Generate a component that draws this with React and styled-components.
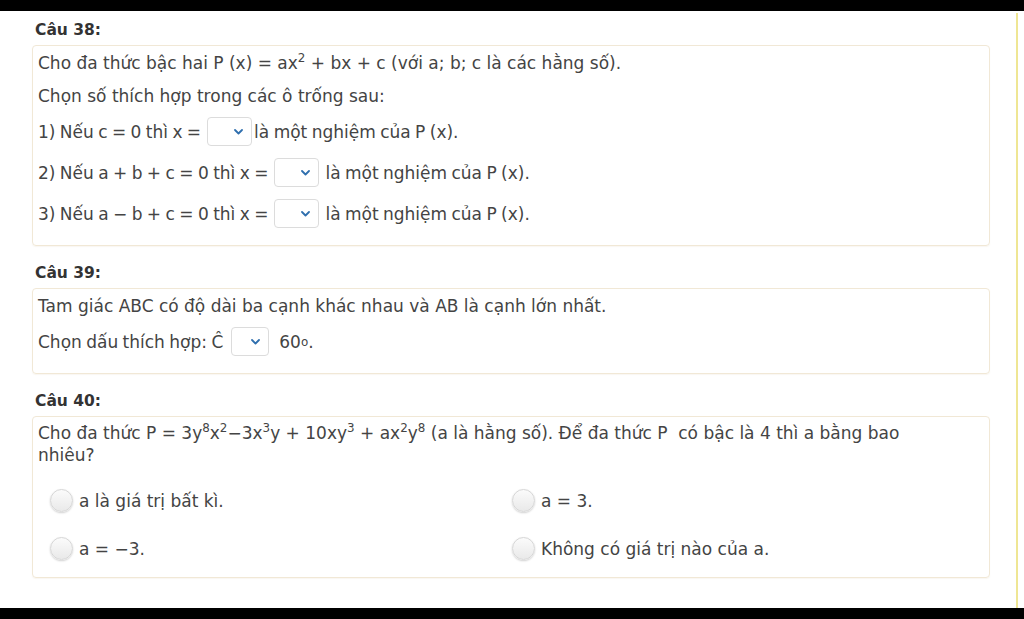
import React from 'react';
import styled, { createGlobalStyle } from 'styled-components';

const GlobalStyle = createGlobalStyle`
  html, body {
    margin: 0;
    padding: 0;
    background: #000;
  }
  body {
    font-family: 'DejaVu Sans', 'Open Sans', sans-serif;
  }
`;

const Screen = styled.div`
  width: 1024px;
  height: 619px;
  display: flex;
  flex-direction: column;
  background: #000;
  overflow: hidden;
`;

const BlackBar = styled.div`
  height: ${(p) => p.$h}px;
  flex: none;
  background: #000;
`;

const Viewport = styled.div`
  flex: 1;
  display: flex;
  background: #fff;
  min-height: 0;
`;

const Page = styled.main`
  width: 958px;
  padding: 0 0 0 32px;
  color: #444;
`;

const Rail = styled.div`
  margin-left: auto;
  width: 2px;
  margin-right: 6px;
  margin-top: 2px;
  background: #efe694;
`;

const Heading = styled.h3`
  margin: ${(p) => (p.$first ? '7px' : '15px')} 0 3px 3px;
  font-size: 15.5px;
  line-height: 24px;
  font-weight: 700;
  color: #333;
`;

const Card = styled.section`
  border: 1px solid #f1e8d6;
  border-radius: 4px;
  padding: 5px 40px 17px 5px;
  display: flex;
  flex-direction: column;
  gap: 9px;
  box-shadow: 0 1px 1px rgba(230, 220, 200, 0.25);
`;

const Line = styled.p`
  margin: 0;
  font-size: 17px;
  line-height: ${(p) => p.$lh || 24}px;
`;

const SelectRow = styled.div`
  display: flex;
  align-items: center;
  height: 29px;
  font-size: 17px;
  word-spacing: -1px;
  white-space: pre;

  & + & {
    margin-top: 3px;
  }
`;

const Select = styled.div`
  width: ${(p) => p.$w || 45}px;
  height: 29px;
  box-sizing: border-box;
  margin: ${(p) => p.$m || '0 6px 0 6px'};
  border: 1px solid #dcdcdc;
  border-radius: 4px;
  background: #fff;
  display: flex;
  align-items: center;
  justify-content: flex-end;
  padding-right: 8px;
`;

const Sup = styled.sup`
  font-size: 0.7em;
  line-height: 0;
  vertical-align: 0.55em;
`;

const Options = styled.div`
  display: grid;
  grid-template-columns: 462px 1fr;
  row-gap: 25px;
  margin: 14px 0 0 12px;
`;

const Option = styled.label`
  display: flex;
  align-items: center;
  gap: 6px;
  font-size: 17px;
  height: 23px;
`;

const Radio = styled.span`
  width: 23px;
  height: 23px;
  box-sizing: border-box;
  border-radius: 50%;
  border: 1px solid #d6d6d6;
  background: linear-gradient(#fbfbfb, #e9e9e9);
  box-shadow: 0 1px 2px rgba(0, 0, 0, 0.18);
  flex: none;
`;

const Chevron = () => (
  <svg width="9" height="6" viewBox="0 0 9 6">
    <path d="M1 1l3.5 3.5L8 1" fill="none" stroke="#2f6fae" strokeWidth="1.8" strokeLinecap="round" strokeLinejoin="round" />
  </svg>
);

const Blank = (props) => (
  <Select {...props}>
    <Chevron />
  </Select>
);

export default function App() {
  return (
    <Screen>
      <GlobalStyle />
      <BlackBar $h={11} />
      <Viewport>
        <Page>
          <Heading $first>Câu 38:</Heading>
          <Card>
            <Line>
              Cho đa thức bậc hai P (x) = ax<Sup>2</Sup> + bx + c (với a; b; c là các hằng số).
            </Line>
            <Line>Chọn số thích hợp trong các ô trống sau:</Line>
            <SelectRow>
              1) Nếu c = 0 thì x =<Blank $m="0 2px 0 6px" />là một nghiệm của P (x).
            </SelectRow>
            <SelectRow>
              2) Nếu a + b + c = 0 thì x =<Blank />là một nghiệm của P (x).
            </SelectRow>
            <SelectRow>
              3) Nếu a − b + c = 0 thì x =<Blank />là một nghiệm của P (x).
            </SelectRow>
          </Card>

          <Heading>Câu 39:</Heading>
          <Card>
            <Line>Tam giác ABC có độ dài ba cạnh khác nhau và AB là cạnh lớn nhất.</Line>
            <SelectRow>
              Chọn dấu thích hợp: Ĉ<Blank $w={38} $m="0 10px 0 8px" />60<Sup>o</Sup>.
            </SelectRow>
          </Card>

          <Heading>Câu 40:</Heading>
          <Card>
            <Line $lh={22}>
              Cho đa thức P = 3y<Sup>8</Sup>x<Sup>2</Sup>−3x<Sup>3</Sup>y + 10xy<Sup>3</Sup> + ax<Sup>2</Sup>y<Sup>8</Sup> (a là hằng số). Để đa thức P&nbsp; có bậc là 4 thì a bằng bao nhiêu?
            </Line>
            <Options>
              <Option>
                <Radio />a là giá trị bất kì.
              </Option>
              <Option>
                <Radio />a = 3.
              </Option>
              <Option>
                <Radio />a = −3.
              </Option>
              <Option>
                <Radio />Không có giá trị nào của a.
              </Option>
            </Options>
          </Card>
        </Page>
        <Rail />
      </Viewport>
      <BlackBar $h={11} />
    </Screen>
  );
}
